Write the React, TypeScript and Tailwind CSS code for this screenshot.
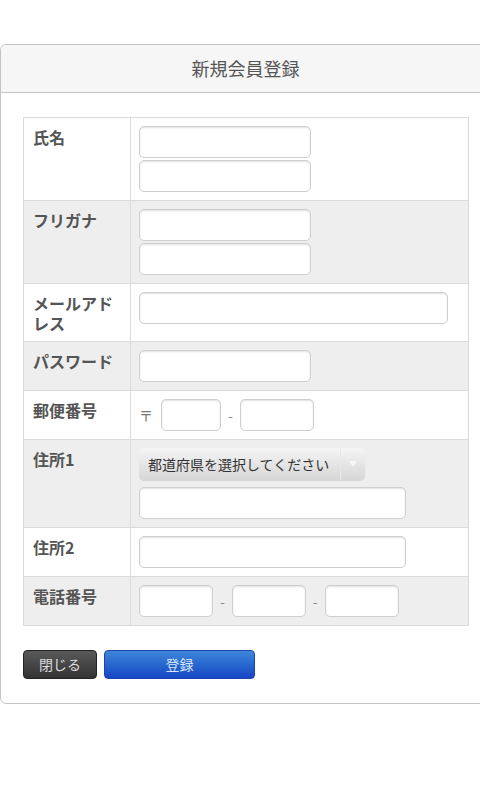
import React from 'react';

const font = { fontFamily: '"Noto Sans CJK JP", "Noto Sans", sans-serif' };

function TextInput({ className = '' }: { className?: string }) {
  return (
    <input
      type="text"
      className={`block h-[32px] rounded-[5px] border border-[#cfcfcf] bg-white shadow-[inset_0_1px_2px_rgba(0,0,0,0.12)] outline-none ${className}`}
    />
  );
}

function Dash() {
  return <span className="px-[7px] text-[14px] text-[#888]">-</span>;
}

const rows: { label: string; gray: boolean; body: React.ReactNode }[] = [
  {
    label: '氏名',
    gray: false,
    body: (
      <div className="flex flex-col gap-[2px]">
        <TextInput className="w-[172px]" />
        <TextInput className="w-[172px]" />
      </div>
    ),
  },
  {
    label: 'フリガナ',
    gray: true,
    body: (
      <div className="flex flex-col gap-[2px]">
        <TextInput className="w-[172px]" />
        <TextInput className="w-[172px]" />
      </div>
    ),
  },
  { label: 'メールアドレス', gray: false, body: <TextInput className="w-[309px]" /> },
  { label: 'パスワード', gray: true, body: <TextInput className="w-[172px]" /> },
  {
    label: '郵便番号',
    gray: false,
    body: (
      <div className="flex items-center">
        <span className="pr-[8px] text-[14px] text-[#777]">〒</span>
        <TextInput className="w-[60px]" />
        <Dash />
        <TextInput className="w-[74px]" />
      </div>
    ),
  },
  {
    label: '住所1',
    gray: true,
    body: (
      <div className="flex flex-col gap-[7px]">
        <div className="flex h-[32px] w-[226px] items-center rounded-[5px] bg-gradient-to-b from-[#f5f5f5] to-[#d6d6d6] shadow-[0_1px_1px_rgba(0,0,0,0.1)]">
          <span className="flex-1 pl-[9px] text-[14px] text-[#333]">都道府県を選択してください</span>
          <span className="flex h-full w-[25px] items-center justify-center border-l border-[#e8e8e8]">
            <svg width="8" height="6" viewBox="0 0 8 6">
              <path d="M0 0 L8 0 L4 6 Z" fill="#f6f6f6" />
            </svg>
          </span>
        </div>
        <TextInput className="w-[267px]" />
      </div>
    ),
  },
  { label: '住所2', gray: false, body: <TextInput className="w-[267px]" /> },
  {
    label: '電話番号',
    gray: true,
    body: (
      <div className="flex items-center">
        <TextInput className="w-[74px]" />
        <Dash />
        <TextInput className="w-[74px]" />
        <Dash />
        <TextInput className="w-[74px]" />
      </div>
    ),
  },
];

export default function App() {
  return (
    <div className="min-h-[810px] w-[480px] overflow-hidden bg-white" style={font}>
      <div className="h-[44px]" />
      <div className="w-[491px] rounded-[6px] border border-[#c4c4c4] bg-white">
        <div className="flex h-[48px] items-center justify-center rounded-t-[6px] border-b border-[#c4c4c4] bg-[#f6f6f6]">
          <h1 className="text-[18px] text-[#555]">新規会員登録</h1>
        </div>

        <div className="pl-[22px] pr-[23px] pt-[24px] pb-[24px]">
          <table className="w-[446px] border-collapse border border-[#dadada]">
            <tbody>
              {rows.map((row) => (
                <tr key={row.label} className={row.gray ? 'bg-[#eeeeee]' : 'bg-white'}>
                  <th className="w-[107px] border border-[#dadada] pl-[9px] pr-[10px] pt-[9px] pb-[8px] text-left align-top text-[16px] font-bold leading-[20px] text-[#555]">
                    {row.label}
                  </th>
                  <td className="border border-[#dadada] py-[8px] pl-[8px] align-top">{row.body}</td>
                </tr>
              ))}
            </tbody>
          </table>

          <div className="mt-[24px] flex gap-[7px]">
            <button className="h-[29px] w-[74px] rounded-[4px] border border-[#222] bg-gradient-to-b from-[#5a5a5a] to-[#333] text-[14px] text-[#ddd]">
              閉じる
            </button>
            <button className="h-[29px] w-[151px] rounded-[4px] border border-[#1d44b0] bg-gradient-to-b from-[#3f86d9] to-[#1845c3] text-[14px] text-[#d6e4ff]">
              登録
            </button>
          </div>
        </div>
      </div>
    </div>
  );
}
